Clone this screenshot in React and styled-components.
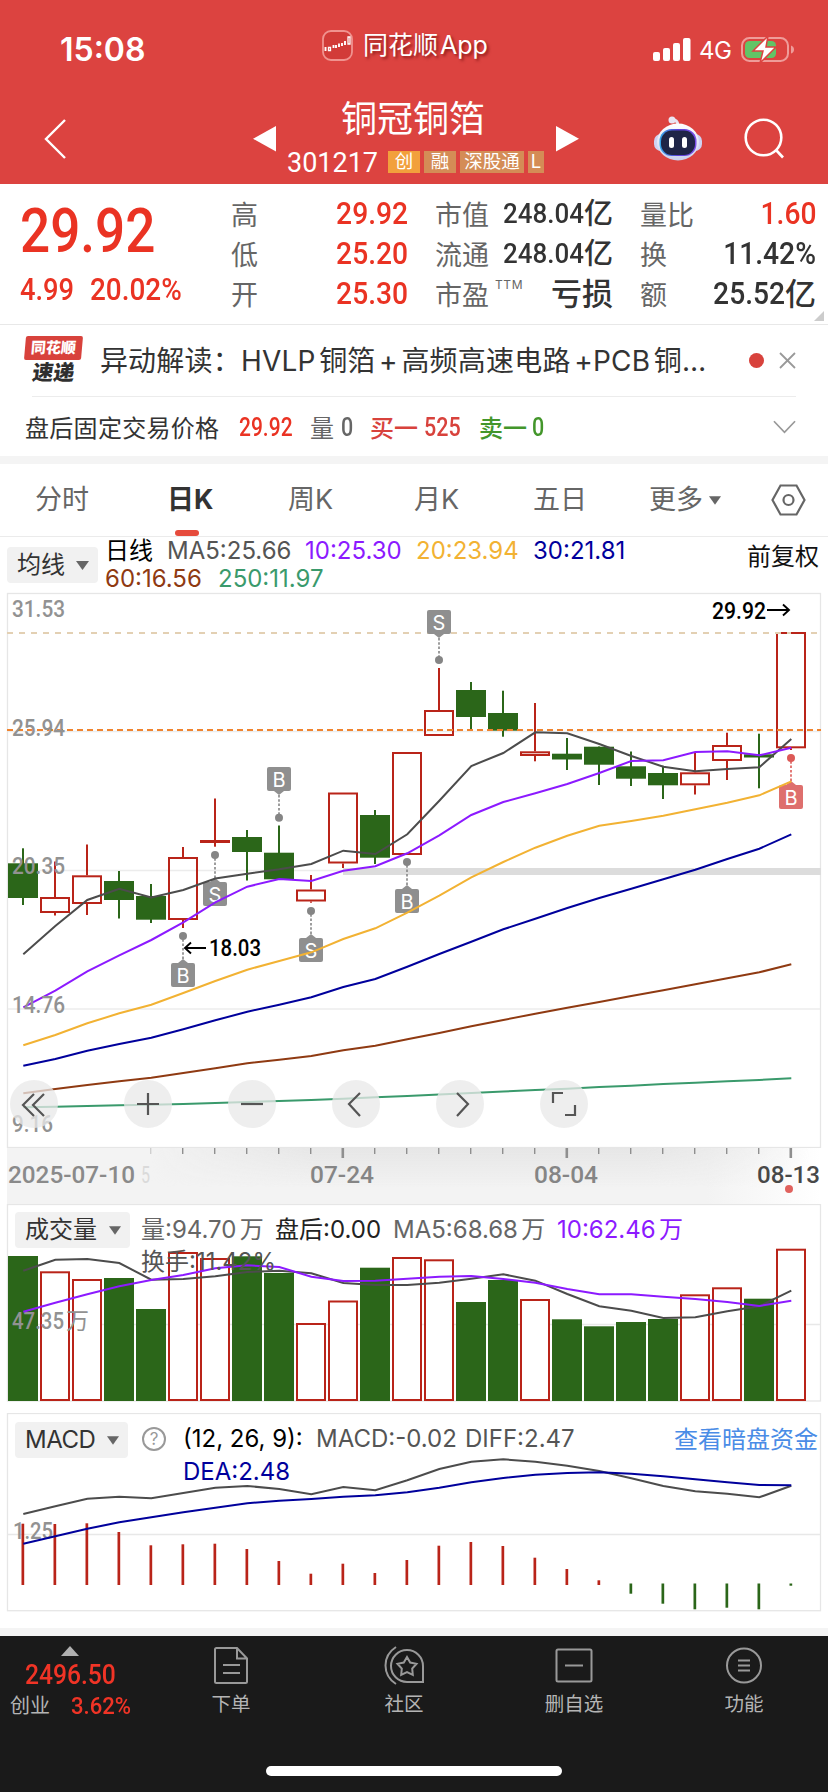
import React from "react";
import styled, { createGlobalStyle } from "styled-components";

const SANS = '"Inter", "Noto Sans CJK SC", sans-serif';
const DIN = '"Roboto", "Noto Sans CJK SC", sans-serif';
const UP = "#b92419";
const DOWN = "#2b6619";
const RED = "#ea3323";

const Global = createGlobalStyle`
  * { box-sizing: border-box; }
  body { margin: 0; background: #fff; }
`;

const Page = styled.main`
  width: 828px;
  height: 1792px;
  display: flex;
  flex-direction: column;
  overflow: hidden;
  background: #fff;
  color: #333;
  font-family: ${SANS};
  white-space: nowrap;
`;

/* ---------- header ---------- */
const Header = styled.header`
  height: 184px;
  flex: none;
  background: #dc4340;
  color: #fff;
`;
const StatusBar = styled.div`
  height: 98px;
  display: grid;
  grid-template-columns: 322px 331px 1fr;
`;
const Clock = styled.div`
  padding: 30px 0 0 60px;
  font-size: 32px;
  line-height: 40px;
  font-weight: 600;
`;
const AppMark = styled.div`
  display: flex;
  gap: 10px;
  padding-top: 30px;
`;
const AppName = styled.span`
  font-size: 25px;
  line-height: 32px;
  margin-top: -1px;
  word-spacing: -5px;
  text-shadow: 2px 2px 3px rgba(90, 0, 0, 0.6);
`;
const StatusIcons = styled.div`
  display: flex;
  padding-top: 36px;
  height: 66px;
`;
const Network = styled.span`
  font-size: 24px;
  line-height: 30px;
  width: 42px;
  margin-left: 8px;
  letter-spacing: -0.5px;
`;
const NavBar = styled.div`
  height: 86px;
  display: grid;
  grid-template-columns: 253px 400px 91px 1fr;
`;
const NavIcon = styled.div`
  padding: ${(p) => p.$pad};
`;
const StockHead = styled.div`
  display: flex;
`;
const Arrow = styled.svg`
  margin-top: 28px;
`;
const StockTitle = styled.div`
  width: 257px;
  margin: 0 12px 0 11px;
`;
const StockName = styled.h1`
  margin: 0 0 0 54px;
  font-size: 36px;
  line-height: 42px;
  font-weight: 400;
`;
const StockMeta = styled.div`
  display: flex;
  align-items: center;
  gap: 4px;
  height: 44px;
`;
const Code = styled.span`
  width: 97px;
  padding-top: 2px;
  font: 400 27px/30px ${DIN};
`;
const Tag = styled.span`
  height: 22px;
  width: ${(p) => p.$w}px;
  background: ${(p) => p.$bg || "#d48c56"};
  font-size: 18.5px;
  line-height: 21px;
  text-align: center;
`;

/* ---------- quote ---------- */
const Quote = styled.section`
  height: 141px;
  flex: none;
  display: flex;
  border-bottom: 1px solid #e8e8e8;
`;
const Din = styled.span`
  display: inline-block;
  font-family: ${DIN};
  font-weight: 500;
  font-size: ${(p) => p.$size || 31}px;
  color: ${(p) => p.$c || "#333"};
  transform: scaleX(${(p) => p.$sx || 0.91});
  transform-origin: ${(p) => p.$from || "left"} center;
`;
const LastPrice = styled.div`
  width: 231px;
  padding-left: 20px;
`;
const BigRow = styled.div`
  height: 62px;
  margin-top: 16px;
  line-height: 62px;
`;
const ChangeRow = styled.div`
  display: flex;
  line-height: 36px;
  margin-top: 10px;
`;
const ChangeItem = styled.span`
  width: ${(p) => p.$w}px;
`;
const StatColumn = styled.dl`
  margin: 0 ${(p) => p.$gap}px 0 0;
  padding-top: 11px;
  width: ${(p) => p.$w}px;
`;
const Stat = styled.div`
  display: flex;
  justify-content: space-between;
  height: 40px;
`;
const StatLabel = styled.dt`
  font-size: 27px;
  line-height: 41px;
  color: #666;
  display: flex;
`;
const Ttm = styled.sup`
  font-size: 12px;
  line-height: 12px;
  margin: 4px 0 0 6px;
  letter-spacing: 0.6px;
`;
const StatValue = styled.dd`
  margin: 0;
  display: flex;
  justify-content: flex-end;
  line-height: 38px;
  width: 10px;
  flex: 1;
  color: ${(p) => p.$c || "#333"};
`;
const Unit = styled.span`
  font-size: ${(p) => p.$size || 29}px;
  font-weight: 500;
`;
const Corner = styled.svg`
  align-self: flex-end;
  margin: 0 0 3px -1px;
`;

/* ---------- alert + after-hours ---------- */
const Alert = styled.section`
  height: 71px;
  flex: none;
  margin: 0 32px 0 25px;
  display: flex;
  align-items: center;
`;
const Brand = styled.div`
  width: 57px;
  margin: 0 18px 0 0;
  text-align: center;
  font-weight: 900;
`;
const BrandTop = styled.div`
  height: 24px;
  background: #d8423c;
  border-radius: 2px;
  color: #fff;
  font-size: 15px;
  line-height: 23px;
  transform: skewX(-5deg);
`;
const BrandBottom = styled.div`
  font-size: 21px;
  line-height: 25px;
  transform: skewX(-8deg);
  color: #2f2f2f;
`;
const AlertText = styled.p`
  margin: 0;
  width: 650px;
  font-size: 28px;
  line-height: 40px;
  letter-spacing: 0.2px;
  word-spacing: -4.5px;
`;
const Dot = styled.i`
  width: 15px;
  height: 15px;
  border-radius: 50%;
  background: #d8423c;
  margin-right: 15px;
`;
const AfterHours = styled.section`
  height: 60px;
  flex: none;
  display: flex;
  align-items: center;
  margin: 0 32px;
  border-top: 1px solid #ececec;
  font-size: 24px;
`;
const AhItem = styled.span`
  width: ${(p) => p.$w}px;
  color: ${(p) => p.$c || "#333"};
  flex: none;
  font-weight: ${(p) => p.$fw || 400};
  margin-left: ${(p) => p.$ml || 0}px;
  letter-spacing: ${(p) => p.$ls || 0}px;
  padding-top: ${(p) => p.$pt || 0}px;
`;
const Band = styled.div`
  height: 8px;
  flex: none;
  background: #f4f4f4;
`;

/* ---------- tabs ---------- */
const Tabs = styled.nav`
  height: 73px;
  flex: none;
  display: flex;
  padding-left: 35px;
  border-bottom: 1px solid #ebebeb;
`;
const Tab = styled.div`
  width: ${(p) => p.$w}px;
  font-size: 27px;
  line-height: 40px;
  color: #666;
  display: flex;
  align-items: center;
  gap: 6px;
  height: 72px;
`;
const ActiveTab = styled(Tab)`
  color: #333;
  font-weight: 700;
  flex-direction: column;
  align-items: flex-start;
  justify-content: space-between;
  padding-top: 16px;
`;
const Underline = styled.i`
  width: 24px;
  height: 6px;
  border-radius: 3px;
  background: #e64b3c;
  margin-left: 8px;
`;

/* ---------- legends ---------- */
const Legend = styled.div`
  display: flex;
  font-size: 24px;
`;
const Picker = styled.button`
  border: 0;
  border-radius: 4px;
  background: #f1f1f1;
  width: ${(p) => p.$w}px;
  height: 36px;
  padding: 0 9px 0 ${(p) => p.$pl || 10}px;
  display: flex;
  flex: none;
  align-items: center;
  justify-content: space-between;
  font: 400 24px/34px ${SANS};
  letter-spacing: ${(p) => p.$ls || 0}px;
  color: #333;
`;
const LegendLines = styled.div`
  margin-left: ${(p) => p.$ml}px;
  padding-top: ${(p) => p.$pt || 0}px;
  line-height: ${(p) => p.$lh}px;
  word-spacing: ${(p) => p.$ws || 0}px;
`;
const LegendLine = styled.div`
  display: flex;
`;
const LegendItem = styled.span`
  width: ${(p) => p.$w}px;
  color: ${(p) => p.$c || "#555"};
`;
const MaBar = styled.section`
  height: 55px;
  flex: none;
  display: flex;
  justify-content: space-between;
  padding: 0 9px 0 7px;
`;
const Adjust = styled.span`
  font-size: 24px;
  line-height: 39px;
  color: #111;
`;
const PickerSlot = styled.div`
  padding-top: 10px;
`;

/* ---------- charts ---------- */
const Stack = styled.section`
  display: grid;
  flex: none;
  height: ${(p) => p.$h}px;
  > * { grid-area: 1 / 1; }
`;
const ChartLegend = styled(Legend)`
  z-index: 1;
  align-self: start;
  padding: ${(p) => p.$pt}px 0 0 15px;
`;
const Tools = styled.div`
  z-index: 1;
  align-self: end;
  display: flex;
  gap: 56px;
  padding: 0 0 20px 10px;
`;
const Tool = styled.button`
  border: 0;
  padding: 0;
  width: 48px;
  height: 48px;
  border-radius: 50%;
  background: rgba(232, 232, 232, 0.76);
  margin-right: ${(p) => (p.$first ? 10 : 0)}px;
`;
const Help = styled.span`
  width: 24px;
  height: 24px;
  border: 2px solid #999;
  border-radius: 50%;
  color: #999;
  font-size: 17px;
  line-height: 20px;
  text-align: center;
  margin: 5px 0 0 14px;
`;
const HiddenFunds = styled.a`
  color: #4a8ce6;
  margin-left: auto;
  padding-right: 10px;
  line-height: 36px;
`;

/* ---------- bottom bar ---------- */
const Footer = styled.footer`
  height: 156px;
  flex: none;
  background: #1a1a1a;
  color: #b4b4b4;
  display: flex;
  flex-direction: column;
  justify-content: space-between;
`;
const FooterRow = styled.div`
  display: flex;
`;
const IndexBox = styled.div`
  width: 145px;
  padding: 10px 0 0 10px;
`;
const IndexArrow = styled.svg`
  display: block;
  margin-left: 51px;
`;
const IndexValue = styled.div`
  padding-left: 15px;
  line-height: 34px;
  height: 34px;
  margin-top: 2px;
`;
const IndexRow = styled.div`
  display: flex;
  font-size: 20px;
  line-height: 28px;
`;
const IndexName = styled.span`
  width: 61px;
`;
const Action = styled.div`
  width: ${(p) => p.$w}px;
  padding-top: 8px;
  display: flex;
  flex-direction: column;
  align-items: center;
  gap: 5px;
  font-size: 19.5px;
  line-height: 26px;
  margin-left: ${(p) => p.$ml}px;
`;
const HomeBar = styled.div`
  width: 296px;
  height: 10px;
  border-radius: 5px;
  background: #fff;
  margin: 0 auto 16px;
`;

/* ---------- data ---------- */
const cx = (i) => 23 + 32 * i;

// [direction, high, low, bodyTop, bodyBottom]
const CANDLES = [
  [0, 848.3, 905, 863.3, 898], [1, 861.5, 915.5, 897, 913], [1, 844.5, 915, 875.3, 904],
  [0, 871, 918.5, 881, 900], [0, 884, 923, 896, 919.7], [1, 847, 928, 857, 920],
  [1, 798.5, 846.7, 840, 843], [0, 830, 880.5, 837, 852], [0, 825.5, 879, 852.7, 879.3],
  [1, 875, 902.7, 889.5, 901.5], [1, 792.5, 868, 792.5, 863.5], [0, 810, 864, 815, 857.7],
  [1, 752, 855, 752, 855], [1, 668, 735, 710, 736], [0, 682, 730, 690, 717],
  [0, 690.7, 736.7, 713, 730.7], [1, 703, 761.3, 751.3, 756], [0, 738, 770, 753.7, 759.5],
  [0, 746.5, 785, 746.7, 764.7], [0, 751.5, 786, 766.3, 778.7], [0, 765.7, 799, 773, 785.3],
  [1, 752.5, 794.5, 772.3, 785.3], [1, 732.7, 780, 745, 761], [0, 733.7, 788.3, 754.3, 757.5],
  [1, 632, 750, 632, 748.3],
];

const MA = [
  ["#4c4c4c", [954.3, 926, 900, 888.7, 897.5, 890, 878.5, 873.7, 869.3, 864, 850.7, 854, 834.3, 800.7, 766, 753, 732.3, 733.3, 744, 756, 766.7, 771.3, 769, 767.3, 739]],
  ["#8c1aff", [1007.3, 990.7, 971.3, 955.3, 940, 922.3, 902.3, 886.7, 879, 881, 870.7, 866.3, 853.3, 835.3, 815, 802, 793.3, 784, 773, 761, 760.3, 752, 751.3, 755.3, 747.7]],
  ["#f2b233", [1045.3, 1035, 1023.3, 1013.3, 1004.7, 993, 981, 969.7, 961, 952.3, 939, 928.3, 912.7, 895.7, 877.3, 862, 847.7, 835.7, 825.7, 821, 815.7, 809.3, 802.7, 795.3, 781.3]],
  ["#00009c", [1065.7, 1059, 1050.7, 1044, 1037.7, 1029.3, 1020.3, 1011.7, 1004.7, 997.3, 987, 979, 966.7, 954, 941.7, 929.3, 918.7, 908, 898, 888.7, 879.3, 869.7, 859, 848.7, 834.3]],
  ["#8f3a12", [1093.3, 1089, 1085, 1081.3, 1077.7, 1073, 1068.3, 1063.3, 1059.7, 1056, 1050.3, 1045.7, 1039.3, 1033, 1026.3, 1020, 1013.7, 1007.7, 1002, 996, 990.3, 984.3, 978.3, 972.3, 964.3]],
  ["#3a9a6c", [1107.3, 1106.7, 1106, 1105.3, 1104.7, 1104, 1103, 1102, 1101, 1100, 1098.7, 1097.3, 1096, 1094.5, 1093, 1091.5, 1090, 1088.7, 1087, 1085.7, 1084, 1082.7, 1081.3, 1080, 1078.3]],
];

const MARKS = [
  ["B", 8, 767, 817.7, 1], ["S", 6, 882, 855, 0], ["S", 9, 938, 911, 0], ["B", 5, 963, 936, 0],
  ["B", 12, 889, 862, 0], ["S", 13, 610, 660, 1], ["B", 24, 785, 758, 0, 1],
];

const VOLUME = [
  [0, 1256], [1, 1271.3], [1, 1279], [0, 1278], [0, 1309], [1, 1252], [1, 1258], [0, 1256.3], [0, 1273],
  [1, 1323], [1, 1300.5], [0, 1267.7], [1, 1257], [1, 1259.3], [0, 1302], [0, 1280], [1, 1299], [0, 1319.3],
  [0, 1326.3], [0, 1322], [0, 1319], [1, 1294.3], [1, 1287.3], [0, 1298.7], [1, 1248.7],
];
const VOL_MA5 = [1270.7, 1259.7, 1259, 1263, 1279.7, 1279, 1276.3, 1272, 1270.7, 1273.3, 1283, 1285, 1285, 1282.7, 1278.7, 1274.3, 1280.7, 1294, 1306.3, 1310.7, 1318, 1317.3, 1311.3, 1306.3, 1290.7];
const VOL_MA10 = [1311.7, 1302.7, 1294.3, 1286.3, 1280, 1275, 1268.3, 1265.3, 1267, 1276.7, 1281, 1280.7, 1278.7, 1276.7, 1276, 1279, 1282.7, 1289, 1294.3, 1294.3, 1296.7, 1299, 1302, 1306, 1300.7];

const MACD = [1523.7, 1524, 1523.3, 1532, 1545.3, 1544.3, 1543.7, 1549, 1561, 1573.7, 1563.7, 1573, 1560, 1545.7, 1542, 1546, 1557.7, 1569, 1580.3, 1593.7, 1603.7, 1609.3, 1607.7, 1609.3, 1585.7];
const DIFF = [1514, 1506.3, 1498.7, 1496.7, 1498.3, 1493, 1487.7, 1486, 1489, 1494.3, 1487, 1490.3, 1480.3, 1469, 1461.7, 1459.3, 1461.7, 1465.7, 1471, 1478.3, 1486, 1491.3, 1493.7, 1497.3, 1485.7];
const DEA = [1543.7, 1536.3, 1528.7, 1522.3, 1517.3, 1512.3, 1507.7, 1503.3, 1500.7, 1499, 1496.7, 1495.3, 1492.3, 1487.7, 1482.3, 1478, 1474.7, 1473, 1472.3, 1473.7, 1476.3, 1479.3, 1482.3, 1485, 1485.3];

/* ---------- chart pieces ---------- */
const Line = ({ ys, color, w = 2 }) => (
  <polyline points={ys.map((y, i) => `${cx(i) + 0.3},${y}`).join(" ")} fill="none" stroke={color} strokeWidth={w} />
);
const AxisText = ({ x = 12, y, w = 53, fill = "#929292", children, fw = 500 }) => (
  <text x={x} y={y} textLength={w} lengthAdjust="spacingAndGlyphs" fontFamily={DIN} fontSize="24" fontWeight={fw} fill={fill}>{children}</text>
);
const Frame = ({ top, bottom }) => (
  <rect x="7.5" y={top} width="813" height={bottom - top} fill="none" stroke="#e6e6e6" strokeWidth="1.3" />
);
const Caret = ({ w = 13, h = 9 }) => (
  <svg width={w} height={h} viewBox="0 0 13 9"><path d="M0 0H13L6.5 9Z" fill="#666" /></svg>
);

const Marker = ({ label, i, y, dot, above, hot }) => {
  const x = cx(i);
  const fill = hot ? "#de6f6d" : "#8f8f8f";
  const edge = above ? y + 24 : y;
  const tip = above ? edge + 4 : edge - 4;
  return (
    <g>
      <line x1={x} x2={x} y1={tip} y2={dot} stroke={hot ? "#dc5956" : "#858585"} strokeWidth="1.6" strokeDasharray="2.5 1.8" />
      <circle cx={x} cy={dot} r="4" fill={hot ? "#dc5956" : "#858585"} />
      <path d={`M${x - 5} ${edge}H${x + 5}L${x} ${tip}Z`} fill={fill} />
      <rect x={x - 12} y={y} width="24" height="24" rx="2" fill={fill} />
      <text x={x} y={y + 19.5} textAnchor="middle" fontFamily={SANS} fontSize="20" fill="#fff">{label}</text>
    </g>
  );
};

const Candle = ({ i, d }) => {
  const [up, hi, lo, top, bot] = d;
  const x = cx(i);
  if (!up) {
    return (
      <g fill={DOWN}>
        <rect x={x - 1} y={hi} width="2" height={lo - hi} />
        <rect x={x - 15} y={top} width="30" height={bot - top} />
      </g>
    );
  }
  return (
    <g>
      <rect x={x - 1} y={hi} width="2" height={Math.max(top - hi, 0)} fill={UP} />
      <rect x={x - 1} y={bot} width="2" height={Math.max(lo - bot, 0)} fill={UP} />
      <rect x={x - 14} y={top + 1} width="28" height={bot - top - 2} fill="none" stroke={UP} strokeWidth="2" />
    </g>
  );
};

const PriceChart = () => (
  <svg width="828" height="556" viewBox="0 592 828 556">
    <Frame top={593.5} bottom={1147.5} />
    {[731.5, 870.5, 1009].map((y) => <line key={y} x1="8" x2="820" y1={y} y2={y} stroke="#ececec" strokeWidth="1.3" />)}
    <rect x="343" y="868" width="478" height="7" fill="#dcdcdc" />
    {CANDLES.map((d, i) => <Candle key={i} i={i} d={d} />)}
    <line x1="7" x2="818" y1="633" y2="633" stroke="#e3d0b3" strokeWidth="1.8" strokeDasharray="6 6" />
    <line x1="791" x2="805" y1="633" y2="633" stroke={UP} strokeWidth="2" />
    <line x1="7" x2="821" y1="730" y2="730" stroke="#f0842f" strokeWidth="2" strokeDasharray="6 4" />
    {MARKS.map(([label, i, y, dot, above, hot]) => <Marker key={i} {...{ label, i, y, dot, above, hot }} />)}
    {MA.map(([c, ys]) => <Line key={c} color={c} ys={ys} />)}
    <AxisText y={617}>31.53</AxisText>
    <AxisText y={735.5}>25.94</AxisText>
    <AxisText y={874}>20.35</AxisText>
    <AxisText y={1013}>14.76</AxisText>
    <AxisText y={1132} w={41}>9.16</AxisText>
    <AxisText x={209} y={956} w={52} fill="#000">18.03</AxisText>
    <AxisText x={712} y={618.5} w={54} fill="#000">29.92</AxisText>
    <path d="M206 948H185M191 942.5L185 948L191 953.5M767 610H789M783 604.500L789 610L783 615.500" fill="none" stroke="#000" strokeWidth="1.9" />
  </svg>
);

const DateAxis = () => (
  <svg width="828" height="56" viewBox="0 1148 828 56">
    <defs>
      <linearGradient id="axisH" x1="0" x2="1"><stop offset="0" stopColor="#f3f3f3" /><stop offset=".86" stopColor="#f3f3f3" /><stop offset="1" stopColor="#fff" /></linearGradient>
      <linearGradient id="axisV" x1="0" x2="0" y1="0" y2="1"><stop offset="0" stopColor="#e6e6e6" /><stop offset=".7" stopColor="#e6e6e6" stopOpacity="0" /></linearGradient>
      <linearGradient id="axisFade" x1="0" x2="1"><stop offset="0" stopColor="#000" /><stop offset=".25" stopColor="#fff" /><stop offset=".75" stopColor="#fff" /><stop offset="1" stopColor="#000" /></linearGradient>
      <mask id="axisMask"><rect x="150" y="1148" width="660" height="56" fill="url(#axisFade)" /></mask>
    </defs>
    <rect x="7" y="1148" width="814" height="56" fill="url(#axisH)" />
    <rect x="150" y="1148" width="660" height="56" fill="url(#axisV)" mask="url(#axisMask)" />
    {Array.from({ length: 21 }, (_, k) => {
      const x = 151 + 32 * k - 0.5;
      const major = k === 6 || k === 13 || k === 20;
      return <rect key={k} x={x - (major ? 1 : 0.5)} y="1148" width={major ? 2.6 : 1.4} height={major ? 10 : 6} fill={k ? "#8f8f8f" : "#cfcfcf"} />;
    })}
    <AxisText x={8} y={1183} w={127} fill="#8a8a8a">2025-07-10</AxisText>
    <AxisText x={141} y={1183} w={9} fill="#dadada" fw={400}>5</AxisText>
    <AxisText x={310} y={1183} w={64} fill="#858585">07-24</AxisText>
    <AxisText x={534} y={1183} w={64} fill="#858585">08-04</AxisText>
    <AxisText x={757} y={1183} w={63} fill="#484848">08-13</AxisText>
    <circle cx="789" cy="1189" r="4" fill="#e0625e" />
  </svg>
);

const VolumeChart = () => (
  <svg width="828" height="198" viewBox="0 1204 828 198">
    <Frame top={1204.5} bottom={1401} />
    <line x1="8" x2="820" y1="1324.500" y2="1324.500" stroke="#e8e8e8" strokeWidth="1.3" />
    {VOLUME.map(([up, y], i) => up
      ? <rect key={i} x={cx(i) - 14} y={y + 1} width="28" height={1399.5 - y - 0.5} fill="#fff" stroke={UP} strokeWidth="2" />
      : <rect key={i} x={cx(i) - 15} y={y} width="30" height={1401 - y} fill={DOWN} />)}
    <AxisText y={1329} w={52}>47.35</AxisText>
    <text x="66" y="1329" fontFamily={SANS} fontSize="23" fill="#929292">万</text>
    <Line ys={VOL_MA5} color="#4c4c4c" />
    <Line ys={VOL_MA10} color="#8c1aff" />
  </svg>
);

const MacdChart = () => (
  <svg width="828" height="199" viewBox="0 1413 828 199">
    <Frame top={1413.5} bottom={1610.7} />
    <line x1="8" x2="820" y1="1534.500" y2="1534.500" stroke="#e8e8e8" strokeWidth="1.3" />
    <AxisText x={13} y={1538.500} w={40}>1.25</AxisText>
    {MACD.map((y, i) => i < 19
      ? <rect key={i} x={cx(i) - 1.5} y={y} width="2.700" height={1585 - y} fill={UP} />
      : <rect key={i} x={cx(i) - 1.5} y="1583.500" width="2.700" height={y - 1583.5} fill={DOWN} />)}
    <Line ys={DIFF} color="#4c4c4c" />
    <Line ys={DEA} color="#00009c" />
  </svg>
);

const TOOL_PATHS = [
  "M24 14L13 25L24 36M34 14L23 25L34 36",
  "M13 24H35M24 13V35",
  "M13 24H35",
  "M28 13L17 24L28 36",
  "M21 13L32 24L21 36",
  "M13 23V13H23M25 35H35V25",
];

const Robot = () => (
  <svg width="50" height="46" viewBox="0 0 50 46">
    <defs>
      <linearGradient id="shell" x1="0" x2="0" y1="0" y2="1"><stop offset="0" stopColor="#fff" /><stop offset="1" stopColor="#c9d0ee" /></linearGradient>
      <linearGradient id="rim" x1="0" x2="1"><stop offset="0" stopColor="#35a8e8" /><stop offset=".5" stopColor="#5b3fd8" /><stop offset="1" stopColor="#7a4fe6" /></linearGradient>
    </defs>
    <path d="M18 4Q25 3 25 10" fill="none" stroke="#e9e4f3" strokeWidth="3" />
    <circle cx="19" cy="4" r="3.500" fill="#e9e4f3" />
    <rect x="1" y="18" width="48" height="17" rx="7" fill="#cfd2f2" />
    <ellipse cx="25" cy="26" rx="21" ry="18.500" fill="url(#shell)" />
    <rect x="6.500" y="13" width="37" height="27" rx="12" fill="url(#rim)" />
    <rect x="8" y="14.500" width="34" height="24.500" rx="11" fill="#1f2547" />
    <rect x="16" y="21" width="5" height="11" rx="2.500" fill="#fff" />
    <rect x="29" y="21" width="5" height="11" rx="2.500" fill="#fff" />
  </svg>
);

const Value = ({ c, children, size, sx }) => (
  <Din $c={c} $size={size} $sx={sx} $from="right">{children}</Din>
);

export default function App() {
  return (
    <Page>
      <Global />
      <Header>
        <StatusBar>
          <Clock>15:08</Clock>
          <AppMark>
            <svg width="31" height="31" viewBox="0 0 31 31">
              <rect x="1" y="1" width="29" height="29" rx="8" fill="#d23b38" stroke="#f0938f" strokeWidth="1.800" />
              <path d="M3.500 17V21M11.500 18V15M14 15V18M17 13.500V17M20 13V16M23 11V15" stroke="#fff" strokeWidth="1.900" />
              <path d="M6.500 17.500H8.500V20.500H6.500ZM26 7H28V14H26Z" fill="none" stroke="#fff" strokeWidth="1.300" />
            </svg>
            <AppName>同花顺 App</AppName>
          </AppMark>
          <StatusIcons>
            <svg width="38" height="26" viewBox="0 0 38 26" fill="#fff">
              <rect x="0" y="16" width="7" height="9" rx="2" /><rect x="10" y="12" width="7" height="13" rx="2" />
              <rect x="20" y="7" width="7" height="18" rx="2" /><rect x="30" y="2" width="7.500" height="23" rx="2" />
            </svg>
            <Network>4G</Network>
            <svg width="54" height="28" viewBox="0 0 54 28">
              <rect x="1" y="2" width="46" height="23" rx="7.500" fill="none" stroke="#ef9c99" strokeWidth="2" />
              <path d="M50 9.500Q53 10.500 53 13.500T50 17.500Z" fill="#ef9c99" />
              <rect x="4" y="5" width="31" height="17" rx="4.500" fill="#62c466" />
              <path d="M27 0L12 15H22L19 27L35 11H25Z" fill="#fff" stroke="#dc4340" strokeWidth="1.500" />
            </svg>
          </StatusIcons>
        </StatusBar>
        <NavBar>
          <NavIcon $pad="20px 0 0 42px">
            <svg width="26" height="42" viewBox="0 0 26 42"><path d="M23 2L4 21L23 40" fill="none" stroke="#fff" strokeWidth="2.400" /></svg>
          </NavIcon>
          <StockHead>
            <Arrow width="23" height="26" viewBox="0 0 23 26"><path d="M23 0V25.500L0 12.800Z" fill="#fff" /></Arrow>
            <StockTitle>
              <StockName>铜冠铜箔</StockName>
              <StockMeta>
                <Code>301217</Code>
                <Tag $w={32} $bg="#f2a03c">创</Tag>
                <Tag $w={32}>融</Tag>
                <Tag $w={64}>深股通</Tag>
                <Tag $w={16}>L</Tag>
              </StockMeta>
            </StockTitle>
            <Arrow width="23" height="26" viewBox="0 0 23 26"><path d="M0 0V25.500L23 12.800Z" fill="#fff" /></Arrow>
          </StockHead>
          <NavIcon $pad="18px 0 0 0"><Robot /></NavIcon>
          <NavIcon $pad="20px 0 0 0">
            <svg width="42" height="42" viewBox="0 0 42 42" fill="none" stroke="#fff" strokeWidth="2.600"><circle cx="19.500" cy="19.500" r="17.800" /><path d="M32 32L39 39.500" /></svg>
          </NavIcon>
        </NavBar>
      </Header>

      <Quote>
        <LastPrice>
          <BigRow><Din $size={61} $c={RED} $sx={0.87}>29.92</Din></BigRow>
          <ChangeRow>
            <ChangeItem $w={70}><Din $c={RED} $sx={0.88}>4.99</Din></ChangeItem>
            <ChangeItem $w={90}><Din $c={RED} $sx={0.9}>20.02%</Din></ChangeItem>
          </ChangeRow>
        </LastPrice>
        <StatColumn $w={177} $gap={27}>
          <Stat><StatLabel>高</StatLabel><StatValue><Value c={RED}>29.92</Value></StatValue></Stat>
          <Stat><StatLabel>低</StatLabel><StatValue><Value c={RED}>25.20</Value></StatValue></Stat>
          <Stat><StatLabel>开</StatLabel><StatValue><Value c={RED}>25.30</Value></StatValue></Stat>
        </StatColumn>
        <StatColumn $w={178} $gap={27}>
          <Stat><StatLabel>市值</StatLabel><StatValue><Value size={28.5}>248.04</Value><Unit>亿</Unit></StatValue></Stat>
          <Stat><StatLabel>流通</StatLabel><StatValue><Value size={28.5}>248.04</Value><Unit>亿</Unit></StatValue></Stat>
          <Stat><StatLabel>市盈<Ttm>TTM</Ttm></StatLabel><StatValue><Unit $size={31}>亏损</Unit></StatValue></Stat>
        </StatColumn>
        <StatColumn $w={176} $gap={-1}>
          <Stat><StatLabel>量比</StatLabel><StatValue><Value c={RED}>1.60</Value></StatValue></Stat>
          <Stat><StatLabel>换</StatLabel><StatValue><Value>11.42%</Value></StatValue></Stat>
          <Stat><StatLabel>额</StatLabel><StatValue><Value>25.52</Value><Unit $size={31}>亿</Unit></StatValue></Stat>
        </StatColumn>
        <Corner width="10" height="10" viewBox="0 0 10 10"><path d="M10 0V10H0Z" fill="#ccc" /></Corner>
      </Quote>

      <Alert>
        <Brand>
          <BrandTop>同花顺</BrandTop>
          <BrandBottom>速递</BrandBottom>
        </Brand>
        <AlertText>异动解读：HVLP 铜箔 + 高频高速电路 +PCB 铜…</AlertText>
        <Dot />
        <svg width="17" height="17" viewBox="0 0 17 17"><path d="M1 1L16 16M16 1L1 16" stroke="#999" strokeWidth="1.800" /></svg>
      </Alert>

      <AfterHours>
        <AhItem $w={214} $ml={-7} $ls={0.3}>盘后固定交易价格</AhItem>
        <AhItem $w={71} $pt={2}><Din $size={25} $sx={0.84} $c={RED}>29.92</Din></AhItem>
        <AhItem $w={31} $c="#666">量</AhItem>
        <AhItem $w={29} $pt={2}><Din $size={25} $sx={0.86} $c="#666">0</Din></AhItem>
        <AhItem $w={54} $c="#d8423c" $fw={500}>买一</AhItem>
        <AhItem $w={55} $pt={2}><Din $size={25} $sx={0.86} $c="#d8423c">525</Din></AhItem>
        <AhItem $w={53} $c="#43962b" $fw={500}>卖一</AhItem>
        <AhItem $w={241} $pt={2}><Din $size={25} $sx={0.86} $c="#43962b">0</Din></AhItem>
        <svg width="24" height="14" viewBox="0 0 24 14"><path d="M1 1L12 12.500L23 1" fill="none" stroke="#999" strokeWidth="1.800" /></svg>
      </AfterHours>
      <Band />

      <Tabs>
        <Tab $w={132}>分时</Tab>
        <ActiveTab $w={121}>日K<Underline /></ActiveTab>
        <Tab $w={126}>周K</Tab>
        <Tab $w={119}>月K</Tab>
        <Tab $w={116}>五日</Tab>
        <Tab $w={122}>更多<Caret w={12} h={9} /></Tab>
        <Tab $w={36}>
          <svg width="35" height="32" viewBox="0 0 35 32" fill="none" stroke="#666" strokeWidth="2.200"><path d="M9.500 1.500H25.500L33.500 16L25.500 30.500H9.500L1.500 16Z" /><circle cx="17.500" cy="16" r="5" /></svg>
        </Tab>
      </Tabs>

      <MaBar>
        <Legend>
          <PickerSlot><Picker $w={91}>均线<Caret /></Picker></PickerSlot>
          <LegendLines $ml={7} $lh={28}>
            <LegendLine>
              <LegendItem $w={62} $c="#000">日线</LegendItem>
              <LegendItem $w={138}>MA5:25.66</LegendItem>
              <LegendItem $w={111} $c="#8c1aff">10:25.30</LegendItem>
              <LegendItem $w={117} $c="#f2b233">20:23.94</LegendItem>
              <LegendItem $w={100} $c="#00009c">30:21.81</LegendItem>
            </LegendLine>
            <LegendLine>
              <LegendItem $w={113} $c="#8f3a12">60:16.56</LegendItem>
              <LegendItem $w={110} $c="#3a9a6c">250:11.97</LegendItem>
            </LegendLine>
          </LegendLines>
        </Legend>
        <Adjust>前复权</Adjust>
      </MaBar>

      <Stack $h={556}>
        <PriceChart />
        <Tools>
          {TOOL_PATHS.map((d, i) => (
            <Tool key={d} $first={i === 0}>
              <svg width="48" height="48" viewBox="0 0 48 48"><path d={d} fill="none" stroke="#555" strokeWidth="2.200" /></svg>
            </Tool>
          ))}
        </Tools>
      </Stack>

      <Stack $h={56}><DateAxis /></Stack>

      <Stack $h={209}>
        <VolumeChart />
        <ChartLegend $pt={8}>
          <Picker $w={115}>成交量<Caret w={12} h={9} /></Picker>
          <LegendLines $ml={11} $lh={32} $pt={2} $ws={-3.5}>
            <LegendLine>
              <LegendItem $w={134} $c="#666">量:94.70 万</LegendItem>
              <LegendItem $w={118} $c="#222">盘后:0.00</LegendItem>
              <LegendItem $w={164} $c="#666">MA5:68.68 万</LegendItem>
              <LegendItem $w={130} $c="#8c1aff">10:62.46 万</LegendItem>
            </LegendLine>
            <LegendLine><LegendItem $w={140}>换手:11.42%</LegendItem></LegendLine>
          </LegendLines>
        </ChartLegend>
      </Stack>

      <Stack $h={215}>
        <MacdChart />
        <ChartLegend $pt={9}>
          <Picker $w={113} $ls={-0.5}>MACD<Caret w={12} h={9} /></Picker>
          <Help>?</Help>
          <LegendLines $ml={17} $lh={33}>
            <LegendLine>
              <LegendItem $w={133} $c="#000">(12, 26, 9):</LegendItem>
              <LegendItem $w={149}>MACD:-0.02</LegendItem>
              <LegendItem $w={110}>DIFF:2.47</LegendItem>
            </LegendLine>
            <LegendLine><LegendItem $w={110} $c="#00009c">DEA:2.48</LegendItem></LegendLine>
          </LegendLines>
          <HiddenFunds>查看暗盘资金</HiddenFunds>
        </ChartLegend>
      </Stack>
      <Band />

      <Footer>
        <FooterRow>
          <IndexBox>
            <IndexArrow width="18" height="10" viewBox="0 0 18 10"><path d="M9 0L18 10H0Z" fill="#b0b0b0" /></IndexArrow>
            <IndexValue><Din $size={28} $sx={0.88} $c="#f03426">2496.50</Din></IndexValue>
            <IndexRow><IndexName>创业</IndexName><Din $size={24} $sx={0.92} $c="#f03426">3.62%</Din></IndexRow>
          </IndexBox>
          <Action $w={60} $ml={56}>
            <svg width="36" height="42" viewBox="0 0 36 42" fill="none" stroke="#999" strokeWidth="2"><path d="M24 4H3.500Q2 4 2 5.500V37.500Q2 39 3.500 39H32.500Q34 39 34 37.500V14.500ZM24 4V14.500H34M10 21H27M10 29H27" /></svg>
            下单
          </Action>
          <Action $w={60} $ml={113}>
            <svg width="42" height="42" viewBox="0 0 42 42" fill="none" stroke="#999" strokeWidth="2"><path d="M13 3C-1 12 -1 31 13 40M40 38H24A16 16 0 1 1 40 22ZM24 13L27.200 18.500L33.500 19.800L29.200 24.500L29.800 30.800L24 28.200L18.200 30.800L18.800 24.500L14.500 19.800L20.800 18.500Z" /></svg>
            社区
          </Action>
          <Action $w={60} $ml={110}>
            <svg width="38" height="42" viewBox="0 0 38 42" fill="none" stroke="#999" strokeWidth="2"><rect x="1.500" y="5.500" width="35" height="32" rx="1.500" /><path d="M10 21.500H28" /></svg>
            删自选
          </Action>
          <Action $w={60} $ml={110}>
            <svg width="36" height="42" viewBox="0 0 36 42" fill="none" stroke="#999" strokeWidth="2"><circle cx="18" cy="21.500" r="17" /><path d="M12 16.500H24M12 21.500H24M12 26.500H24" /></svg>
            功能
          </Action>
        </FooterRow>
        <HomeBar />
      </Footer>
    </Page>
  );
}
